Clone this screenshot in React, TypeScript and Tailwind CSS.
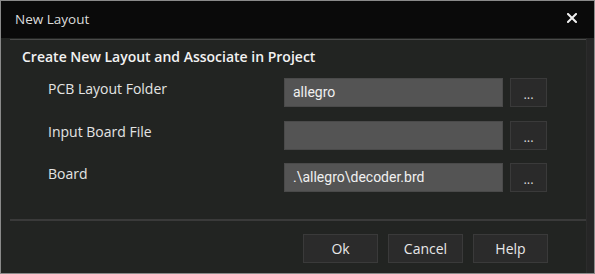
export default function App() {
  const rows = [
    { label: 'PCB Layout Folder', value: 'allegro', gap: 'mb-[14px]' },
    { label: 'Input Board File', value: '', gap: 'mb-[13px]' },
    { label: 'Board', value: '.\\allegro\\decoder.brd', gap: '' },
  ]

  return (
    <div className="w-[595px] h-[274px] border border-[#8a8a8a] flex flex-col bg-[#222422] font-['Open_Sans',sans-serif] text-[#e6e6e6] overflow-hidden">
      {/* Title bar */}
      <div className="h-[37px] bg-[#0a0a0a] flex items-center justify-between pl-[14px] pr-[17px] shrink-0">
        <span className="text-[13.5px] text-[#dcdcdc]">New Layout</span>
        <svg width="10" height="10" viewBox="0 0 10 10" className="mt-[-4px]">
          <path d="M1 1 L9 9 M9 1 L1 9" stroke="#f0f0f0" strokeWidth="2" strokeLinecap="square" />
        </svg>
      </div>

      {/* Body */}
      <div className="flex-1 flex">
        <div className="w-[9px] shrink-0" />
        <div className="w-[576px] flex flex-col border-t border-[#4a4a4a] mt-[1px]">
          <div className="pl-[12px] pt-[7px] text-[14px] leading-[19px] font-semibold text-[#f2f2f2]">
            Create New Layout and Associate in Project
          </div>

          <div className="mt-[12px] flex flex-col">
            {rows.map((row, i) => (
              <div key={i} className={`flex items-start ${row.gap}`}>
                <div className="w-[274px] pl-[38px] text-[14px] leading-[19px] pt-[1px] text-[#e4e4e4]">
                  {row.label}
                </div>
                <div className="w-[219px] h-[29px] bg-[#545454] border border-[#4a4a4a] flex items-center px-[8px] font-['Roboto',sans-serif] text-[14px] text-[#f0f0f0]">
                  {row.value}
                </div>
                <button className="ml-[7px] w-[37px] h-[29px] bg-[#2a2a2a] border border-[#3a3a3a] text-[13px] text-[#d8d8d8] flex items-center justify-center leading-none pt-[3px]">
                  ...
                </button>
              </div>
            ))}
          </div>

          <div className="mt-[27px] h-[2px] bg-[#3a3a3a]" />

          <div className="flex justify-end gap-[10px] pr-[38px] mt-[13px]">
            {['Ok', 'Cancel', 'Help'].map((b) => (
              <button
                key={b}
                className="w-[75px] h-[29px] bg-[#2b2b2b] border border-[#3a3a3a] text-[14px] text-[#e8e8e8] flex items-center justify-center"
              >
                {b}
              </button>
            ))}
          </div>
        </div>
        <div className="w-[8px] shrink-0 bg-[#262626] border-l border-[#2c2c2c]" />
      </div>
    </div>
  )
}
